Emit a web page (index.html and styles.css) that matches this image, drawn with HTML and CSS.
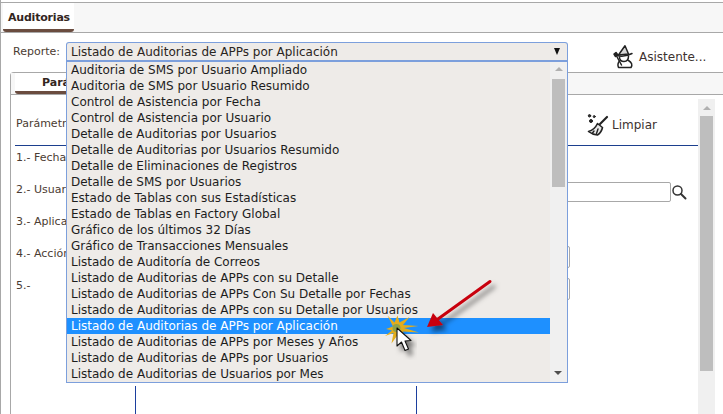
FILE: index.html
```html
<!DOCTYPE html>
<html lang="es">
<head>
<meta charset="utf-8">
<title>Auditorias</title>
<link rel="stylesheet" href="styles.css">
</head>
<body>
<div class="app">
  <div class="topbar"><div class="toptab">Auditorias</div></div>
  <div class="report-row">
    <span class="report-label">Reporte:</span>
    <div class="select-wrap">
      <div class="select"><span>Listado de Auditorias de APPs por Aplicación</span><i class="caret"></i></div>
      <div class="dropdown">
        <ul class="options">
          <li>Auditoria de SMS por Usuario Ampliado</li>
          <li>Auditoria de SMS por Usuario Resumido</li>
          <li>Control de Asistencia por Fecha</li>
          <li>Control de Asistencia por Usuario</li>
          <li>Detalle de Auditorias por Usuarios</li>
          <li>Detalle de Auditorias por Usuarios Resumido</li>
          <li>Detalle de Eliminaciones de Registros</li>
          <li>Detalle de SMS por Usuarios</li>
          <li>Estado de Tablas con sus Estadísticas</li>
          <li>Estado de Tablas en Factory Global</li>
          <li>Gráfico de los últimos 32 Días</li>
          <li>Gráfico de Transacciones Mensuales</li>
          <li>Listado de Auditoría de Correos</li>
          <li>Listado de Auditorias de APPs con su Detalle</li>
          <li>Listado de Auditorias de APPs Con Su Detalle por Fechas</li>
          <li>Listado de Auditorias de APPs con su Detalle por Usuarios</li>
          <li class="selected">Listado de Auditorias de APPs por Aplicación</li>
          <li>Listado de Auditorias de APPs por Meses y Años</li>
          <li>Listado de Auditorias de APPs por Usuarios</li>
          <li>Listado de Auditorias de Usuarios por Mes</li>
        </ul>
        <div class="dd-scroll">
          <i class="arrow-up"></i>
          <div class="dd-thumb"></div>
          <i class="arrow-down dd-down"></i>
        </div>
      </div>
    </div>
    <div class="wizard">
      <svg class="wizard-icon" width="22" height="24" viewBox="0 0 22 24" fill="none" stroke="#222" stroke-width="1.5" stroke-linejoin="round" stroke-linecap="round">
        <path d="M5.5 10 L9 5 L12 0.8 L15.5 9 Z" fill="#d8d8d8"/>
        <path d="M4 10.5 Q11 12.5 19 8.5"/>
        <path d="M6.5 12 Q6.5 16.5 11 16.5 Q15.5 16.5 15.5 11"/>
        <path d="M6.5 16 Q4 19 5.5 22.5 L18 22.5 Q20.5 18.5 15.5 15.5"/>
        <path d="M3 10 L8.5 20"/>
        <path d="M1 9 L3 7.5 L4.5 9.5 L2.5 11.5 Z" fill="#222"/>
      </svg>
      <span>Asistente...</span>
    </div>
  </div>

  <div class="panel">
    <div class="panel-tabs"><div class="panel-tab">Parámetros</div></div>
    <div class="panel-body">
      <div class="panel-main">
        <div class="toolbar">
          <span class="toolbar-title">Parámetros</span>
          <div class="clear">
            <svg width="22" height="22" viewBox="0 0 22 22" fill="none" stroke="#222" stroke-linejoin="round" stroke-linecap="round">
              <path d="M20 3 L13 10" stroke-width="2.2"/>
              <path d="M10.5 9.5 L15.5 13.5 Q14.5 18.5 10.5 21 Q5 20.5 1.5 17.5 Q7.5 16 10.5 9.5 Z" fill="#e8e8e8" stroke-width="1.6"/>
              <path d="M7 17 L5.5 19 M11 15 L9.5 19.5" stroke-width="1.4"/>
              <circle cx="2.5" cy="1.8" r="1.2" fill="#333"/>
              <circle cx="7.2" cy="2.6" r="1" fill="#555"/>
              <circle cx="4" cy="7" r="1.5" fill="#222"/>
            </svg>
            <span>Limpiar</span>
          </div>
        </div>
        <div class="params">
          <div class="param">1.- Fecha</div>
          <div class="param">2.- Usuario
            <div class="search-group">
              <div class="input search-input"></div>
              <svg width="16" height="16" viewBox="0 0 16 16" fill="none" stroke="#333" stroke-width="1.5" stroke-linecap="round"><circle cx="6.5" cy="6.5" r="4.5"/><path d="M10 10 L14.5 14.5" stroke-width="2"/></svg>
            </div>
          </div>
          <div class="param">3.- Aplicación</div>
          <div class="param">4.- Acción<div class="input short-input"></div></div>
          <div class="param">5.-<div class="input short-input"></div></div>
        </div>
        <div class="results"><div class="col col-a"></div><div class="col col-b"></div></div>
      </div>
      <div class="main-scroll">
        <i class="arrow-up"></i>
        <div class="main-thumb"></div>
      </div>
    </div>
  </div>
</div>

<svg class="annotation" width="140" height="100" viewBox="380 270 140 100">
  <defs>
    <filter id="shadow" x="-30%" y="-30%" width="170%" height="170%">
      <feDropShadow dx="4" dy="5" stdDeviation="2.5" flood-color="#000" flood-opacity=".5"/>
    </filter>
  </defs>
  <path d="M387.5 315.5 L394.5 322.5 L397.5 315.5 L399.5 322.5 L409.5 317 L403 325 L418.5 326 L404 328 L419 332.5 L403 331.5 L405 341 L399 333 L391.5 343.5 L393.5 333 L385 336 L392 330.5 L386 329 L393 326.5 Z" fill="#e3ad1c"/>
  <circle cx="396.5" cy="328" r="4" fill="#8fa24a"/>
  <path d="M397 328 L397 346 L401.5 342 L405 350.5 L408.5 349 L405 341 L411 340.5 Z" fill="#fff" stroke="#111" stroke-width="1.1" stroke-linejoin="round" filter="url(#shadow)"/>
  <g filter="url(#shadow)">
    <path d="M490 281.5 L438 319" stroke="#c8040c" stroke-width="3" stroke-linecap="round"/>
    <path d="M427 327 L433 313 L443 325 Z" fill="#c8040c"/>
  </g>
</svg>
</body>
</html>
```

FILE: styles.css
```css
* { box-sizing: border-box; }
html, body { margin: 0; padding: 0; }
body {
  width: 723px;
  height: 414px;
  overflow: hidden;
  position: relative;
  background: #fff;
  font-family: "DejaVu Sans", sans-serif;
  font-size: 11px;
  color: #4b3c32;
}
.app {
  height: 414px;
  padding-top: 2px;
  border-left: 1px solid #a8a8a8;
}
.topbar {
  height: 31px;
  background: #f7f7f7;
  border-top: 1px solid #a8a8a8;
  border-bottom: 1px solid #a8a8a8;
  padding-left: 2px;
}
.toptab {
  width: 71px;
  height: 29px;
  padding: 8px 0 0 5px;
  background: #fff;
  border-bottom: 3px solid #6a4c3f;
  border-radius: 0 0 3px 3px;
  font-weight: bold;
  letter-spacing: -0.2px;
  color: #33261e;
}
.report-row {
  display: flex;
  align-items: flex-start;
  padding: 9px 0 0 12px;
  height: 39px;
}
.report-label { width: 53px; padding-top: 3px; }
.select-wrap { position: relative; width: 502px; }
.select {
  height: 20px;
  display: flex;
  align-items: center;
  justify-content: space-between;
  padding: 0 7px 0 4px;
  background: #eeebe8;
  border: 1px solid #7c9fdc;
  border-bottom-width: 2px;
  border-radius: 3px 3px 0 0;
  font-size: 12px;
  color: #2a2522;
}
.caret {
  width: 0; height: 0;
  border-left: 3.5px solid transparent;
  border-right: 3.5px solid transparent;
  border-top: 7px solid #111;
}
.dropdown {
  position: absolute;
  top: 20px;
  left: 0;
  z-index: 5;
  width: 502px;
  height: 321px;
  display: flex;
  background: #eeebe8;
  border: 1px solid #7c9fdc;
  border-top: 0;
}
.options {
  list-style: none;
  margin: 0;
  padding: 0;
  flex: 1;
  font-size: 12px;
  color: #1d1d1d;
}
.options li {
  height: 16px;
  line-height: 16px;
  padding-left: 4px;
  white-space: nowrap;
}
.options .selected { background: #1e90ff; color: #fff; }
.dd-scroll {
  width: 17px;
  position: relative;
  background: #f0f0f0;
  padding: 5px 2px 0;
}
.arrow-up, .arrow-down {
  display: block;
  width: 0; height: 0;
  margin: 0 auto;
  border-left: 4px solid transparent;
  border-right: 4px solid transparent;
}
.arrow-up { border-bottom: 4px solid #b0b0b0; }
.arrow-down { border-top: 4px solid #505050; }
.dd-thumb { height: 108px; margin-top: 8px; background: #bebebe; }
.dd-down { position: absolute; bottom: 7px; left: 4px; }
.wizard {
  display: flex;
  align-items: center;
  gap: 4px;
  margin: 3px 0 0 45px;
  color: #3d3230;
  font-size: 12px;
}
.panel {
  margin-left: 9px;
  height: 342px;
  border-left: 1px solid #a8a8a8;
  border-top: 1px solid #a8a8a8;
  border-radius: 4px 0 0 0;
}
.panel-tabs {
  height: 22px;
  background: #f7f7f7;
  border-bottom: 1px solid #a8a8a8;
  padding-left: 4px;
}
.panel-tab {
  width: 108px;
  height: 21px;
  padding: 3px 0 0 27px;
  background: #fff;
  border-bottom: 3px solid #6a4c3f;
  border-radius: 0 0 3px 3px;
  font-weight: bold;
  color: #33261e;
}
.panel-body { display: flex; height: 319px; padding-left: 4px; padding-top: 4px; }
.panel-main { width: 683px; }
.toolbar {
  height: 47px;
  border-bottom: 1px solid #1c3f8e;
  display: flex;
  align-items: flex-start;
  justify-content: space-between;
  padding: 18px 41px 0 1px;
}
.clear { display: flex; align-items: center; gap: 3px; margin-top: -3px; font-size: 12px; color: #3d3230; }
.params { height: 240px; padding: 4px 0 0 1px; }
.param { height: 32px; position: relative; line-height: 15px; }
.input {
  position: absolute;
  background: #fff;
  border: 1px solid #a8a8a8;
  border-radius: 2px;
}
.search-group { position: absolute; top: 0; left: 0; width: 670px; }
.search-input { left: 400px; width: 255px; top: 0; height: 20px; }
.search-group svg { position: absolute; left: 655px; top: 2px; }
.short-input { right: 128px; width: 200px; top: 0; height: 22px; }
.results { display: flex; height: 30px; }
.col-a { width: 121px; border-right: 1px solid #1c3f9e; }
.col-b { width: 281px; border-right: 1px solid #1c3f9e; }
.main-scroll {
  width: 17px;
  background: #f0f0f0;
  padding: 7px 2px 0;
}
.main-thumb { height: 255px; margin-top: 6px; background: #bebebe; }
.annotation { position: absolute; left: 380px; top: 270px; z-index: 10; overflow: visible; }
```
